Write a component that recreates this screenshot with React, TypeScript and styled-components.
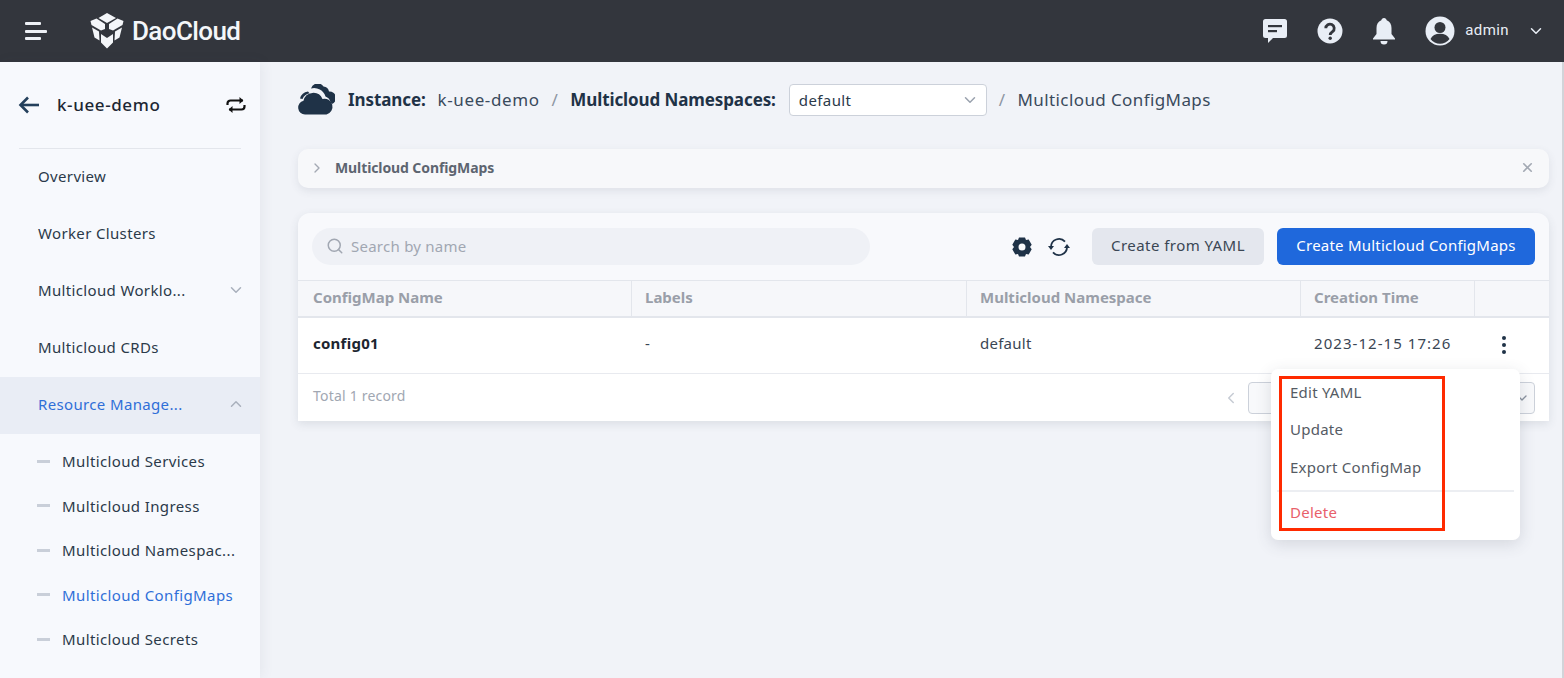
import styled, { createGlobalStyle } from "styled-components";
import { ChevronDown, ChevronLeft, ChevronRight, ChevronUp, Search, X } from "lucide-react";

const GlobalStyle = createGlobalStyle`
  html, body {
    margin: 0;
    padding: 0;
    height: 100%;
    overflow: hidden;
    background: #f1f3f8;
    font-family: "Noto Sans", "Open Sans", sans-serif;
    font-size: 15px;
    letter-spacing: 0.25px;
    color: #2b3a4a;
  }
  * { box-sizing: border-box; }
`;

const Page = styled.div`
  width: 1564px;
  height: 678px;
  display: flex;
  flex-direction: column;
  overflow: hidden;
`;

const TopBar = styled.header`
  height: 62px;
  flex: none;
  display: flex;
  align-items: center;
  padding: 0 19px 0 25px;
  background: #33363d;
  color: #e9eef6;
`;

const MenuLines = styled.div`
  width: 24px;
  display: flex;
  flex-direction: column;
  gap: 4.5px;
  margin-right: 41px;
`;

const MenuLine = styled.span<{ $w: number }>`
  display: block;
  height: 3px;
  width: ${({ $w }) => $w}px;
  border-radius: 1px;
  background: #eef1f6;
`;

const Brand = styled.div`
  display: flex;
  align-items: center;
  gap: 8px;
  font-family: Roboto, sans-serif;
  font-size: 26px;
  font-weight: 500;
  letter-spacing: -0.6px;
  color: #f4f6f9;
`;

const TopRight = styled.div`
  margin-left: auto;
  display: flex;
  align-items: center;
  color: #e9eef6;
`;

const TopIcon = styled.span`
  display: flex;
  width: 54.5px;
  justify-content: center;
  &:nth-child(3) { margin-right: 14px; }
`;

const UserName = styled.span`
  font-family: Roboto, sans-serif;
  font-size: 15px;
  letter-spacing: 0.4px;
  margin: 0 18px 2px 10px;
`;

const Body = styled.div`
  flex: 1;
  display: flex;
  min-height: 0;
`;

const Sidebar = styled.aside`
  width: 260px;
  flex: none;
  background: #f7f9fd;
  box-shadow: 2px 0 12px rgba(60, 70, 90, 0.07);
`;

const SideHead = styled.div`
  height: 87px;
  margin: 0 19px;
  display: flex;
  align-items: center;
  border-bottom: 1px solid #e3e6ec;
  padding-bottom: 1px;
  font-size: 17px;
  font-weight: 500;
  letter-spacing: 0.6px;
  color: #1d2733;
`;

const BackSlot = styled.span`
  display: flex;
  margin-left: -1px;
`;

const SwapSlot = styled.span`
  display: flex;
  margin-right: -5px;
`;

const SideTitle = styled.span`
  margin-left: 17px;
  flex: 1;
`;

const NavRow = styled.div<{ $open?: boolean }>`
  height: 57px;
  display: flex;
  align-items: center;
  justify-content: space-between;
  padding: 0 15px 3px 38px;
  letter-spacing: 0.35px;
  background: ${({ $open }) => ($open ? "#e9edf5" : "transparent")};
  color: ${({ $open }) => ($open ? "#2f6fd8" : "#2b3a4a")};
  svg { color: #a9b0bc; }
`;

const SubRow = styled.div<{ $active?: boolean }>`
  height: 44.5px;
  display: flex;
  align-items: center;
  gap: 12px;
  padding-left: 37px;
  letter-spacing: 0.38px;
  color: ${({ $active }) => ($active ? "#2f6fd8" : "#2b3a4a")};
  &::before {
    content: "";
    width: 13px;
    height: 3px;
    background: #c9cfd9;
  }
`;

const SubList = styled.div`
  padding-top: 5px;
`;

const Main = styled.main`
  flex: 1;
  min-width: 0;
  padding: 22px 15px 0 38px;
`;

const Crumbs = styled.div`
  height: 32px;
  display: flex;
  align-items: center;
  font-size: 17px;
  letter-spacing: 0.4px;
  color: #3a4a5c;
`;

const CloudSlot = styled.span`
  display: flex;
  margin: 0 13px 0 -1px;
`;

const CrumbLabel = styled.strong`
  font-weight: 700;
  font-size: 17px;
  letter-spacing: -0.1px;
  color: #1f3247;
  padding-bottom: 2px;
`;

const CrumbSep = styled.span`
  color: #8d96a3;
  margin: 0 12px;
  padding-bottom: 2px;
`;

const CrumbValue = styled.span<{ $gap?: number }>`
  margin-left: ${({ $gap }) => $gap ?? 0}px;
  padding-bottom: 2px;
  letter-spacing: 0.6px;
`;

const CrumbTail = styled.span`
  padding-bottom: 2px;
`;

const SelectBox = styled.div`
  width: 198px;
  height: 32px;
  margin-left: 13px;
  display: flex;
  align-items: center;
  justify-content: space-between;
  padding: 0 7px 1px 9px;
  background: #fff;
  border: 1px solid #ccd1da;
  border-radius: 4px;
  font-size: 15px;
  color: #2b3a4a;
  svg { color: #9aa2ae; }
`;

const Banner = styled.div`
  height: 39px;
  margin-top: 33px;
  display: flex;
  align-items: center;
  padding: 0 14px 2px 11px;
  gap: 10px;
  background: #f7f8fa;
  border-radius: 10px;
  box-shadow: 0 3px 8px rgba(60, 70, 90, 0.1);
  font-size: 14px;
  font-weight: 700;
  letter-spacing: -0.1px;
  color: #5d6570;
  svg { color: #a3a9b3; }
`;

const BannerText = styled.span`
  flex: 1;
`;

const Card = styled.section`
  position: relative;
  margin-top: 25px;
  background: #f8f9fc;
  border-radius: 12px 12px 0 0;
  box-shadow: 0 3px 10px rgba(60, 70, 90, 0.12);
`;

const Toolbar = styled.div`
  height: 67px;
  display: flex;
  align-items: center;
  padding: 0 14px;
`;

const SearchBox = styled.div`
  width: 558px;
  height: 37px;
  display: flex;
  align-items: center;
  gap: 7px;
  padding: 0 14px 2px;
  border-radius: 19px;
  background: #eff1f6;
  color: #a1a7b2;
`;

const ToolIcons = styled.div`
  margin-left: auto;
  display: flex;
  align-items: center;
  gap: 14px;
  margin-right: 21px;
`;

const Button = styled.button<{ $primary?: boolean }>`
  height: 37px;
  border: 0;
  border-radius: 6px;
  font: inherit;
  padding: 0 0 3px;
  letter-spacing: ${({ $primary }) => ($primary ? "0.22px" : "0.45px")};
  width: ${({ $primary }) => ($primary ? "258px" : "172px")};
  margin-left: ${({ $primary }) => ($primary ? "13px" : "0")};
  background: ${({ $primary }) => ($primary ? "#1f68dc" : "#e4e7ee")};
  color: ${({ $primary }) => ($primary ? "#fff" : "#3a4654")};
`;

const Table = styled.div`
  background: #fff;
`;

const Grid = styled.div`
  display: grid;
  grid-template-columns: 334px 335px 334px 174px 74px;
`;

const HeadRow = styled(Grid)`
  height: 38px;
  background: #f6f7fa;
  border-top: 1px solid #e3e6ec;
  border-bottom: 2px solid #e3e6ec;
  font-weight: 700;
  letter-spacing: 0;
  color: #9a9fa9;
`;

const HeadCell = styled.div`
  display: flex;
  align-items: center;
  padding: 0 0 3px 13px;
  border-right: 1px solid #e3e6ec;
  &:first-child { padding-left: 15px; }
  &:last-child { border-right: 0; }
`;

const DataRow = styled(Grid)`
  height: 56px;
  border-bottom: 1px solid #e8eaef;
`;

const DataCell = styled.div<{ $bold?: boolean }>`
  display: flex;
  align-items: center;
  padding: 0 0 5px 13px;
  font-weight: ${({ $bold }) => ($bold ? 700 : 400)};
  color: ${({ $bold }) => ($bold ? "#1c2530" : "#3a4654")};
  &:first-child { padding-left: 15px; }
`;

const DateCell = styled(DataCell)`
  letter-spacing: 1.05px;
  white-space: nowrap;
`;

const ActionCell = styled.div`
  display: flex;
  align-items: center;
  padding: 0 0 2px 26px;
`;

const Footer = styled.div`
  height: 47px;
  display: flex;
  align-items: center;
  justify-content: space-between;
  padding: 0 14px 0 15px;
  background: #fff;
  font-size: 14px;
  letter-spacing: 0.2px;
  color: #a1a7b2;
`;

const FooterNote = styled.span`
  padding-bottom: 4px;
`;

const Pager = styled.div`
  display: flex;
  align-items: center;
  gap: 8px;
  color: #c6cbd4;
`;

const PageInput = styled.div`
  width: 287px;
  height: 32px;
  display: flex;
  align-items: center;
  justify-content: flex-end;
  padding-right: 4px;
  border: 1px solid #ccd1da;
  border-radius: 4px;
  background: #f8f9fb;
  color: #8b93a0;
`;

const Menu = styled.div`
  position: absolute;
  top: 156px;
  right: 29px;
  width: 249px;
  padding: 4px 6px 9px;
  background: #fff;
  border-radius: 7px;
  box-shadow: 0 4px 16px rgba(60, 70, 90, 0.16);
`;

const MenuItem = styled.div<{ $danger?: boolean }>`
  height: 37.5px;
  display: flex;
  align-items: center;
  padding-left: 13px;
  color: ${({ $danger }) => ($danger ? "#e8606a" : "#555b64")};
`;

const MenuDivider = styled.div`
  height: 2px;
  margin: 4px 0 2px;
  background: #eceef2;
`;

const Highlight = styled.div`
  position: absolute;
  left: 8px;
  top: 7px;
  width: 166px;
  height: 155px;
  border: 3px solid #ff2a00;
  pointer-events: none;
`;

const ScreenEdge = styled.div`
  position: fixed;
  top: 62px;
  right: 0;
  width: 2px;
  bottom: 0;
  background: #d2d4d9;
`;

const Logo = () => (
  <svg width="34" height="36" viewBox="0 0 34 36" fill="#f4f6f9">
    <polygon points="17,0 26,5 17,10 8.500,5" />
    <polygon points="0.500,8 6.500,5.500 15,11 15,16 11,17.500 1.500,12" />
    <polygon points="33.500,8 27.500,5.500 19,11 19,16 23,17.500 32.500,12" />
    <polygon points="2,14.500 9,18.500 9.500,27.500 4.500,24.500" />
    <polygon points="32,14.500 25,18.500 24.500,27.500 29.500,24.500" />
    <polygon points="11,21 17,25 23,21 23,29.500 17,35.500 11,29.500" />
  </svg>
);

const ChatIcon = () => (
  <svg width="26" height="26" viewBox="0 0 26 26" fill="currentColor">
    <path d="M3.500 1h19A2.500 2.500 0 0 1 25 3.500v14a2.500 2.500 0 0 1-2.500 2.500H11l-5 5v-5H3.500A2.500 2.500 0 0 1 1 17.500v-14A2.500 2.500 0 0 1 3.500 1z" />
    <rect x="6" y="7" width="14" height="2.200" fill="#33363d" />
    <rect x="6" y="12" width="9" height="2.200" fill="#33363d" />
  </svg>
);

const HelpIcon = () => (
  <svg width="26" height="26" viewBox="0 0 26 26">
    <circle cx="13" cy="13" r="12.500" fill="currentColor" />
    <path d="M8.800 10.300a4.200 4.200 0 1 1 6.800 3.300c-1.500 1.100-2.400 1.700-2.400 3.400" fill="none" stroke="#33363d" strokeWidth="2.800" />
    <circle cx="13.200" cy="20.200" r="1.700" fill="#33363d" />
  </svg>
);

const BellIcon = () => (
  <svg width="26" height="28" viewBox="0 0 26 28" fill="currentColor">
    <path d="M13 1c1.500 0 2.500 1 2.700 2.300C19 4.500 20.500 7.500 20.500 11v6l3.500 4.500v1H2v-1L5.500 17v-6c0-3.500 1.500-6.500 4.800-7.700C10.500 2 11.500 1 13 1z" />
    <path d="M9.500 24h7a3.500 3.500 0 0 1-7 0z" />
  </svg>
);

const UserIcon = () => (
  <svg width="30" height="30" viewBox="0 0 30 30">
    <circle cx="15" cy="15" r="14.500" fill="currentColor" />
    <circle cx="15" cy="11.500" r="5.500" fill="#33363d" />
    <path d="M5.500 23c1.500-3.500 5-5.300 9.500-5.300s8 1.800 9.500 5.300a12 12 0 0 1-19 0z" fill="#33363d" />
  </svg>
);

const BackArrow = () => (
  <svg width="22" height="18" viewBox="0 0 22 18" fill="none" stroke="#24405c" strokeWidth="2.600">
    <path d="M21 9H3" />
    <path d="M10 1.500L2.500 9l7.500 7.500" />
  </svg>
);

const SwapIcon = () => (
  <svg width="20" height="18" viewBox="0 0 20 18" fill="none" stroke="#111" strokeWidth="2.200">
    <path d="M1.500 9V7.500A3 3 0 0 1 4.500 4.500H17" />
    <path d="M13.500 1l3.800 3.500L13.500 8" fill="#111" stroke="none" />
    <path d="M18.500 9v1.500a3 3 0 0 1-3 3H3" />
    <path d="M6.500 10l-3.800 3.500L6.500 17" fill="#111" stroke="none" />
  </svg>
);

const CloudIcon = () => (
  <svg width="38" height="32" viewBox="0 0 38 32" fill="#1f3247">
    <path d="M8 30.500a7 7 0 0 1-1.500-13.800A10 10 0 0 1 25.500 15a7.800 7.800 0 0 1 4 15.500z" />
    <path d="M14 4.500a7 7 0 0 1 12.500-2 6 6 0 0 1 5.500 5 6.500 6.500 0 0 1 3 12.500l-1.500-2a8 8 0 0 0-5-5.500A12 12 0 0 0 14 4.500z" />
    <path d="M3 14.500A9.500 9.500 0 0 1 11 7.500l1.500 1.800a10 10 0 0 0-7 5.700z" />
  </svg>
);

const GearIcon = () => (
  <svg width="22" height="22" viewBox="0 0 22 22">
    <path
      fill="#1f3247"
      fillRule="evenodd"
      d="M8 1.500h6l1 2.600 2.700-.5 3 5.200L19 10.900v.2l1.700 2.100-3 5.200-2.700-.5-1 2.600H8l-1-2.600-2.700.5-3-5.200L3 11.100v-.2L1.300 8.800l3-5.200 2.700.5zM11 7.500a3.500 3.500 0 1 0 0 7 3.500 3.500 0 0 0 0-7z"
    />
  </svg>
);

const RefreshIcon = () => (
  <svg width="24" height="22" viewBox="0 0 24 22" fill="none" stroke="#1f3247" strokeWidth="1.800">
    <path d="M4 11a8 8 0 0 1 14-5.300" />
    <path d="M20 11a8 8 0 0 1-14 5.300" />
    <path d="M1 10h6l-3 4z" fill="#1f3247" stroke="none" />
    <path d="M17 12h6l-3-4z" fill="#1f3247" stroke="none" />
  </svg>
);

const KebabIcon = () => (
  <svg width="6" height="20" viewBox="0 0 6 20" fill="#1f3247">
    <circle cx="3" cy="3" r="2" />
    <circle cx="3" cy="10" r="2" />
    <circle cx="3" cy="17" r="2" />
  </svg>
);

const subItems = [
  "Multicloud Services",
  "Multicloud Ingress",
  "Multicloud Namespac...",
  "Multicloud ConfigMaps",
  "Multicloud Secrets",
];

const columns = ["ConfigMap Name", "Labels", "Multicloud Namespace", "Creation Time", ""];

export default function App() {
  return (
    <Page>
      <GlobalStyle />
      <TopBar>
        <MenuLines>
          <MenuLine $w={16} />
          <MenuLine $w={22} />
          <MenuLine $w={16} />
        </MenuLines>
        <Brand>
          <Logo />
          DaoCloud
        </Brand>
        <TopRight>
          <TopIcon><ChatIcon /></TopIcon>
          <TopIcon><HelpIcon /></TopIcon>
          <TopIcon><BellIcon /></TopIcon>
          <UserIcon />
          <UserName>admin</UserName>
          <ChevronDown size={18} />
        </TopRight>
      </TopBar>
      <Body>
        <Sidebar>
          <SideHead>
            <BackSlot><BackArrow /></BackSlot>
            <SideTitle>k-uee-demo</SideTitle>
            <SwapSlot><SwapIcon /></SwapSlot>
          </SideHead>
          <NavRow>Overview</NavRow>
          <NavRow>Worker Clusters</NavRow>
          <NavRow>
            Multicloud Worklo...
            <ChevronDown size={18} />
          </NavRow>
          <NavRow>Multicloud CRDs</NavRow>
          <NavRow $open>
            Resource Manage...
            <ChevronUp size={18} />
          </NavRow>
          <SubList>
            {subItems.map((item) => (
              <SubRow key={item} $active={item === "Multicloud ConfigMaps"}>
                {item}
              </SubRow>
            ))}
          </SubList>
        </Sidebar>
        <Main>
          <Crumbs>
            <CloudSlot><CloudIcon /></CloudSlot>
            <CrumbLabel>Instance:</CrumbLabel>
            <CrumbValue $gap={12}>k-uee-demo</CrumbValue>
            <CrumbSep>/</CrumbSep>
            <CrumbLabel>Multicloud Namespaces:</CrumbLabel>
            <SelectBox>
              default
              <ChevronDown size={18} />
            </SelectBox>
            <CrumbSep>/</CrumbSep>
            <CrumbTail>Multicloud ConfigMaps</CrumbTail>
          </Crumbs>
          <Banner>
            <ChevronRight size={16} />
            <BannerText>Multicloud ConfigMaps</BannerText>
            <X size={15} strokeWidth={2.6} />
          </Banner>
          <Card>
            <Toolbar>
              <SearchBox>
                <Search size={18} />
                Search by name
              </SearchBox>
              <ToolIcons>
                <GearIcon />
                <RefreshIcon />
              </ToolIcons>
              <Button>Create from YAML</Button>
              <Button $primary>Create Multicloud ConfigMaps</Button>
            </Toolbar>
            <Table>
              <HeadRow>
                {columns.map((col) => (
                  <HeadCell key={col}>{col}</HeadCell>
                ))}
              </HeadRow>
              <DataRow>
                <DataCell $bold>config01</DataCell>
                <DataCell>-</DataCell>
                <DataCell>default</DataCell>
                <DateCell>2023-12-15 17:26</DateCell>
                <ActionCell><KebabIcon /></ActionCell>
              </DataRow>
            </Table>
            <Footer>
              <FooterNote>Total 1 record</FooterNote>
              <Pager>
                <ChevronLeft size={18} />
                <PageInput><ChevronDown size={16} /></PageInput>
              </Pager>
            </Footer>
            <Menu>
              <MenuItem>Edit YAML</MenuItem>
              <MenuItem>Update</MenuItem>
              <MenuItem>Export ConfigMap</MenuItem>
              <MenuDivider />
              <MenuItem $danger>Delete</MenuItem>
              <Highlight />
            </Menu>
          </Card>
        </Main>
      </Body>
      <ScreenEdge />
    </Page>
  );
}
